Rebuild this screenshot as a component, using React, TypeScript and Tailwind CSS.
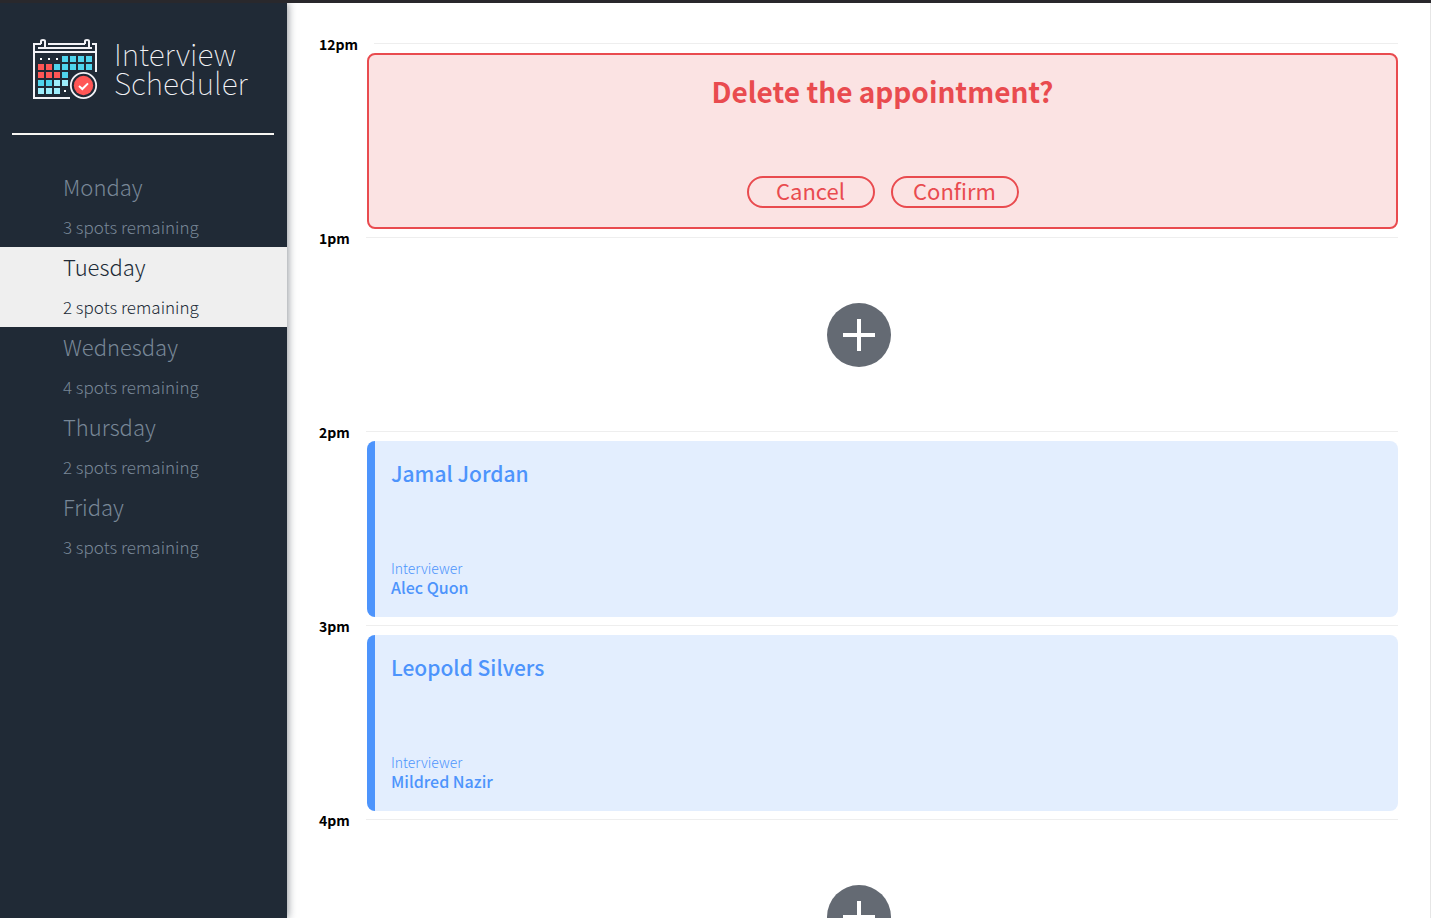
type Day = { name: string; spots: number };

type Slot =
  | { time: string; kind: "empty" }
  | { time: string; kind: "confirm"; message: string }
  | { time: string; kind: "booked"; student: string; interviewer: string };

const days: Day[] = [
  { name: "Monday", spots: 3 },
  { name: "Tuesday", spots: 2 },
  { name: "Wednesday", spots: 4 },
  { name: "Thursday", spots: 2 },
  { name: "Friday", spots: 3 },
];

const slots: Slot[] = [
  { time: "12pm", kind: "confirm", message: "Delete the appointment?" },
  { time: "1pm", kind: "empty" },
  { time: "2pm", kind: "booked", student: "Jamal Jordan", interviewer: "Alec Quon" },
  { time: "3pm", kind: "booked", student: "Leopold Silvers", interviewer: "Mildred Nazir" },
  { time: "4pm", kind: "empty" },
];

// Calendar cells by row: "." dot, "r" red, "b" blue, "p" pale blue
const cells = ["...bbbb", "rrbbbbb", "rrrb", "bbpp", "ppp."];
const cellColors: Record<string, string> = { r: "#ff5655", b: "#4fd5ee", p: "#9eeefc" };

function CalendarLogo() {
  return (
    <svg viewBox="36 24 198 186" className="h-[62px] w-[66px] shrink-0" aria-hidden="true">
      <g fill="none" stroke="#f3f3f7" strokeWidth="6">
        <path d="M63 42H42V204H150" />
        <path d="M216 42H228V126" />
        <path d="M84 42H195" />
        <path d="M54 54H216" />
        <path d="M42 66H228" />
        <path d="M63 42V34Q63 30 69 30Q75 30 75 34V54" />
        <path d="M195 42V34Q195 30 201 30Q207 30 207 34V54" />
      </g>
      {cells.map((row, r) =>
        row.split("").map((c, i) =>
          c === "." ? (
            <rect key={`${r}-${i}`} x={60 + i * 24} y={84 + r * 24} width="6" height="6" fill="#fff" />
          ) : (
            <rect key={`${r}-${i}`} x={54 + i * 24} y={78 + r * 24} width="18" height="18" fill={cellColors[c]} />
          ),
        ),
      )}
      <circle cx="190.500" cy="166.500" r="38" fill="#202a36" stroke="#f3f3f7" strokeWidth="5.500" />
      <circle cx="190.500" cy="166.500" r="29" fill="#ff5655" />
      <path d="M177 168L187 177L204 160" fill="none" stroke="#fff" strokeWidth="6" />
    </svg>
  );
}

function Sidebar() {
  return (
    <aside className="z-10 flex w-[287px] shrink-0 flex-col bg-[#202a36] shadow-[1px_0_8px_rgba(32,42,54,0.5)]">
      <a href="#" className="flex h-[97px] items-start gap-4 pt-[35px] pl-8 text-[#f3f3f7]">
        <CalendarLogo />
        <span className="pt-px text-[30px] leading-[29px] font-thin">
          Interview
          <br />
          Scheduler
        </span>
      </a>
      <hr className="mr-[13px] mt-[33px] mb-8 ml-3 border-t-2 border-[#f7f6f3]" />
      <nav aria-label="Days">
        <ul>
          {days.map((day) => {
            const selected = day.name === "Tuesday";
            return (
              <li key={day.name}>
                <button
                  type="button"
                  aria-pressed={selected}
                  className={
                    selected
                      ? "block w-full bg-[#efefef] pl-[63px] text-left font-light text-[#202a36]"
                      : "block w-full pl-[63px] text-left font-light text-[#788797]"
                  }
                >
                  <span className="block text-[22px] leading-[38px]">{day.name}</span>
                  <span className="mt-0.5 block text-[17px] leading-10">{day.spots} spots remaining</span>
                </button>
              </li>
            );
          })}
        </ul>
      </nav>
    </aside>
  );
}

function ConfirmCard({ message }: { message: string }) {
  return (
    <section className="ml-12 flex h-44 flex-col items-center justify-between rounded-lg border-2 border-[#e94b4f] bg-[#fbe3e3] pt-4 pb-[19px] text-[#e94b4f]">
      <h1 className="text-[28px] leading-10 font-bold">{message}</h1>
      <div className="flex gap-4">
        {["Cancel", "Confirm"].map((label) => (
          <button
            key={label}
            type="button"
            className="flex h-8 w-32 items-center justify-center rounded-full border-2 border-[#e94b4f] pb-1 text-[22px] leading-6"
          >
            {label}
          </button>
        ))}
      </div>
    </section>
  );
}

function BookedCard({ student, interviewer }: { student: string; interviewer: string }) {
  return (
    <section className="ml-12 flex h-44 flex-col justify-between rounded-lg border-l-8 border-[#4d94fc] bg-[#e3eefe] px-4 pt-4 pb-[21px] text-[#4d94fc]">
      <h2 className="text-[21px] leading-8 font-medium">{student}</h2>
      <div>
        <h4 className="text-[14px] leading-5 font-light">Interviewer</h4>
        <h3 className="text-[16px] leading-[18px] font-medium">{interviewer}</h3>
      </div>
    </section>
  );
}

function AddSlot() {
  return (
    <div className="flex h-44 items-center justify-center">
      <button
        type="button"
        aria-label="Add appointment"
        className="flex size-16 items-center justify-center rounded-full bg-[#646a73]"
      >
        <svg viewBox="0 0 32 32" className="size-8" aria-hidden="true">
          <path d="M16 0V32M0 16H32" stroke="#fff" strokeWidth="4" />
        </svg>
      </button>
    </div>
  );
}

export default function App() {
  return (
    <div className="flex h-screen flex-col overflow-hidden border-t-[3px] border-[#29282c] bg-white font-['Noto_Sans_CJK_SC',sans-serif]">
      <div className="flex min-h-0 flex-1">
        <Sidebar />
        <main className="min-w-0 flex-1 overflow-y-auto border-r border-[#e6e6e6] px-8 pt-[34px] [scrollbar-width:none]">
          {slots.map((slot) => (
            <article key={slot.time} className="mb-0.5">
              <header className="flex h-4 gap-4">
                <h4 className="text-[14px] leading-[14px] font-bold text-black">{slot.time}</h4>
                <hr className="mt-1.5 flex-1 border-[#eeeeee]" />
              </header>
              {slot.kind === "confirm" && <ConfirmCard message={slot.message} />}
              {slot.kind === "booked" && <BookedCard student={slot.student} interviewer={slot.interviewer} />}
              {slot.kind === "empty" && <AddSlot />}
            </article>
          ))}
        </main>
      </div>
    </div>
  );
}
